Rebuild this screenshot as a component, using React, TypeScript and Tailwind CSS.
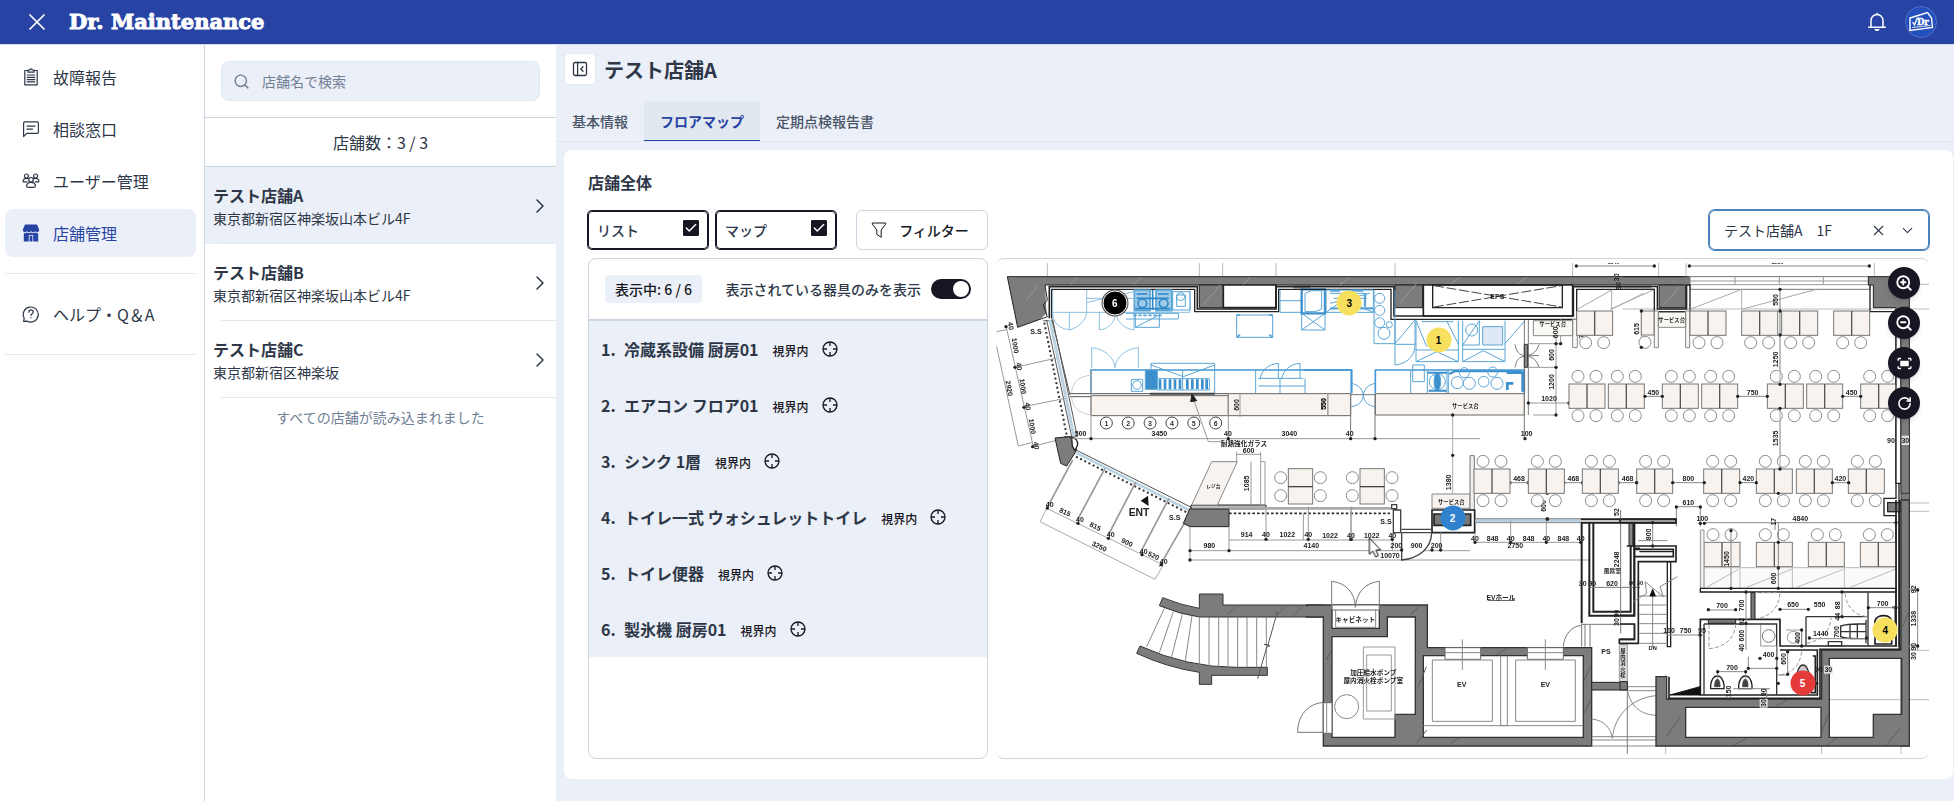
import { useState, type ReactNode } from "react";
import { Check, ChevronDown, ChevronRight, RotateCw, Search, X, ZoomIn, ZoomOut } from "lucide-react";
import { MdFitScreen } from "react-icons/md";

/* ---------- icons ---------- */

const iconProps = {
  width: 18,
  height: 18,
  viewBox: "0 0 18 18",
  fill: "none",
  stroke: "currentColor",
  strokeWidth: 1.2,
  strokeLinecap: "round" as const,
  strokeLinejoin: "round" as const,
  "aria-hidden": true,
};

const ClipboardIcon = () => (
  <svg {...iconProps}>
    <path d="M6 2.5H2.8v14.3h12.4V2.5H12" />
    <path d="M6 4.2V2h1.8a1.2 1.2 0 0 1 2.4 0H12v2.2z" />
    <path d="M5.2 7h7.6M5.2 9.3h7.6M5.2 11.6h7.6M5.2 13.9h7.6" />
  </svg>
);
const ChatIcon = () => (
  <svg {...iconProps}>
    <path d="M1.6 16.6V3a1.2 1.2 0 0 1 1.2-1.2h12.4A1.2 1.2 0 0 1 16.4 3v9.2a1.2 1.2 0 0 1-1.2 1.2H4.6z" />
    <path d="M5 6.2h8M5 9.2h5.5" />
  </svg>
);
const UsersIcon = () => (
  <svg {...iconProps}>
    <circle cx="4.4" cy="4" r="2" />
    <circle cx="13.6" cy="4" r="2" />
    <circle cx="9" cy="7.8" r="2.3" />
    <path d="M4.6 14.4c0-2.4 1.6-4 4.4-4s4.4 1.6 4.4 4c0 1.2-8.800 1.200-8.800 0z" />
    <path d="M4.900 9.800H1.200C.7 8 2 6.300 4.500 6.300c.8 0 1.400.2 1.900.5M13.100 9.800h3.700c.5-1.800-.8-3.500-3.300-3.500-.8 0-1.400.2-1.900.5" />
  </svg>
);
const StoreIcon = () => (
  <svg {...iconProps} fill="currentColor" stroke="none">
    <path d="M3 0.600h12l2.200 5.200c0 1.400-1 2.400-2.100 2.400s-2-.9-2-1.800c0 .9-.9 1.800-2.050 1.800S9 7.300 9 6.400c0 .9-.9 1.800-2.050 1.800S4.900 7.300 4.900 6.400c0 .9-.9 1.800-2 1.800S.8 7.200.8 5.800z" />
    <path d="M1.800 9.200c1.200.3 2.300 0 3.100-.7 1.100 1 3 1 4.100 0 1.100 1 3 1 4.100 0 .8.700 1.900 1 3.100.7v8.200h-5V11H6.800v6.400h-5zM7.600 11.800h2.800v5.600H7.600z" fillRule="evenodd" />
  </svg>
);
const HelpIcon = () => (
  <svg {...iconProps}>
    <path d="M1.700 16.400l.5-3.200A7.500 7.500 0 1 1 5.300 16.200z" />
    <path d="M6.900 7.200c0-3 4.300-2.900 4.300-.2 0 1.700-2.200 1.700-2.200 3.500M9 12.700v.1" />
  </svg>
);
const BellIcon = () => (
  <svg width="20" height="20" viewBox="0 0 20 20" fill="none" stroke="currentColor" strokeWidth="1.500" aria-hidden="true">
    <path d="M4 15V8.500a6 6 0 0 1 12 0V15M1.200 15.200h17.600M10 .8v1.700" />
    <path d="M7.300 17h5.400c-.5 2.700-4.900 2.700-5.400 0z" fill="currentColor" stroke="none" />
  </svg>
);
const TargetIcon = () => (
  <svg width="16" height="16" viewBox="0 0 16 16" fill="none" stroke="currentColor" strokeWidth="1.300" aria-hidden="true">
    <circle cx="8" cy="8" r="7" />
    <path d="M8 1v4M8 11v4M1 8h4M11 8h4" />
  </svg>
);
const FunnelIcon = () => (
  <svg width="16" height="16" viewBox="0 0 16 16" fill="none" stroke="currentColor" strokeWidth="1" strokeLinejoin="round" aria-hidden="true">
    <path d="M1.300 1h13.400v1.200L10.200 8v7.300L5.800 12.400V8L1.300 2.200z" />
  </svg>
);
const CollapseIcon = () => (
  <svg width="16" height="16" viewBox="0 0 16 16" fill="none" stroke="currentColor" strokeWidth="1.300" strokeLinecap="round" strokeLinejoin="round" aria-hidden="true">
    <rect x="1.500" y="1.500" width="13" height="13" rx="1.500" />
    <path d="M5.600 1.500v13M11 5.800L8.800 8l2.200 2.200" />
  </svg>
);

/* ---------- floor plan ---------- */

const BLUE = "#5aa5d6";
const WALL = "#7c7c7c";
const BEIGE = "#f8f3ef";

function T({ x, y, s, r = 0, size = 21 }: { x: number; y: number; s: string; r?: number; size?: number }) {
  return (
    <text x={x} y={y} fontSize={size} textAnchor="middle" dominantBaseline="central" transform={r ? `rotate(${r} ${x} ${y})` : undefined}>
      {s}
    </text>
  );
}

function Seat({ x, y }: { x: number; y: number }) {
  return <circle cx={x} cy={y} r="18" fill="#fff" stroke="#8b8b8b" strokeWidth="3" />;
}

function Pair({ x, y, up = true, down = true }: { x: number; y: number; up?: boolean; down?: boolean }) {
  return (
    <g>
      {up && <><Seat x={x + 27} y={y - 23} /><Seat x={x + 81} y={y - 23} /></>}
      {down && <><Seat x={x + 27} y={y + 95} /><Seat x={x + 81} y={y + 95} /></>}
      <rect x={x} y={y} width="108" height="73" fill={BEIGE} stroke="#777" strokeWidth="3" />
      <path d={`M${x + 54} ${y}v73`} stroke="#555" strokeWidth="4" />
    </g>
  );
}

function SidePair({ x }: { x: number }) {
  return (
    <g>
      <Seat x={x - 23} y={683} /><Seat x={x - 23} y={737} />
      <Seat x={x + 96} y={683} /><Seat x={x + 96} y={737} />
      <rect x={x} y={656} width="73" height="106" fill={BEIGE} stroke="#777" strokeWidth="3" />
      <path d={`M${x} 710h73`} stroke="#444" strokeWidth="4" />
    </g>
  );
}

function Dots({ at }: { at: number[][] }) {
  return <>{at.map(([x, y]) => <circle key={`${x}-${y}`} cx={x} cy={y} r="5" fill="#222" stroke="none" />)}</>;
}

const Tile = ({ x, y, children }: { x: number; y: number; children: ReactNode }) => <g transform={`translate(${x} ${y})`}>{children}</g>;

function FloorPlan() {
  return (
    <svg viewBox="0 0 2799 1473" className="block w-full font-['Liberation_Sans','Noto_Sans_CJK_JP',sans-serif] font-bold" role="img" aria-label="1F フロアマップ">
      <g fill="none" stroke="#444" strokeWidth="3" className="blur-[1px]">
        {/* perimeter guide lines */}
        <g stroke="#bbb">
          <path d="M154 0v40M610 0v40M680 0v40M840 0v40M1197 0v40M1730 0v40M1988 0v40M2070 0v40M2635 0v40" />
          <path d="M2620 64h179M1880 138h919M2705 720h94M2705 745h94M2700 1162h99M2480 1310h319M2009 1235v238M2477 1435v38M2715 1435v38M1894 1300v173" />
        </g>

        {/* north-west: glazed façade, kitchen */}
        <Tile x={-18} y={-39}>
          <path d="M52 80H2758V105H165L170 190L150 208L83 232z" fill={WALL} stroke="none" />
          <path d="M2080 105H165L172 150L160 165L172 200L150 208L83 232L52 80H2080" stroke="#222" />
          <path d="M628 105H700V173H628z" fill={WALL} stroke="#222" />
          <path d="M700 105H858V173H700z" fill="#fff" stroke="#222" strokeWidth="5" />
          <path d="M185 205V118H614V185H866V118H960" stroke="#222" strokeWidth="4" />
          <path d="M178 205V110H622V177H858V110H960" stroke="#222" strokeWidth="5" />
          <path d="M110 150l34-44M240 104l24-22M430 104l24-22M640 165l50-60M760 104l20-22" stroke="#999" />
          <path d="M170 210L245 560M188 208L262 560M160 212h28M222 560h40" stroke="#555" />
          <path d="M180 210L252 560" stroke="#b9d3e2" strokeWidth="9" />
          <path d="M163 218L230 555" stroke="#333" strokeWidth="6" strokeDasharray="6 8" />
          <path d="M185 205L240 435M240 431H715M240 440H715" stroke="#555" />
          <path d="M48 228L130 590M20 290L85 588M75 352L200 324M102 470L225 445M125 590L235 562M85 588L125 578M20 245l30-6" stroke="#999" />
          <path d="M195 564L240 560L260 600L230 648L212 640z" fill={WALL} stroke="#222" />
          <path d="M245 562c14 2 18 10 18 22l-8 18-8-14z" fill="#fff" stroke="#222" strokeWidth="4" />
          <path d="M258 600L610 775" stroke="#555" />
          <path d="M258 608L600 782" stroke="#b9d3e2" strokeWidth="8" />
          <path d="M258 620L596 790" stroke="#333" strokeWidth="6" strokeDasharray="6 8" />
          <path d="M248 630L170 775M345 655L262 810M437 697L355 855M537 745L450 910M600 790L508 950" stroke="#999" strokeWidth="5" />
          <path d="M170 775L520 945M150 815L495 988M150 815l20-40M495 988l25-43" stroke="#aaa" />
          <path d="M452 752L474 737L476 768z" fill="#111" stroke="none" />
          <Dots at={[[48, 230], [75, 352], [102, 472], [128, 590], [172, 774], [264, 820], [355, 865], [456, 914], [514, 944]]} />
          <path d="M600 775L580 820L600 830H717V775z" fill={WALL} stroke="#222" />
          <path d="M603 765H828V777H603z" fill="#bbb" stroke="#222" />
          <path d="M665 635H742L682 765H605z" fill={BEIGE} stroke="#888" />
          <path d="M812 635H825V765H812zM740 635v-30M812 635v-30M740 613h72M783 635v130" stroke="#999" />
          {/* blue equipment */}
          <g stroke={BLUE}>
            <path d="M188 120V187H290V120M290 187H600V120M290 145H430M290 158L430 125M188 187c0 30 20 50 50 52V187M238 240c30-8 50-30 52-53M328 187V240c30-4 48-24 48-53M432 187V240c-30-4-50-24-56-53" stroke="#8cc0e2" />
            <path d="M433 120H480V182H433zM498 120H545V182H498z" fill="#9fcbe8" strokeWidth="5" />
            <g stroke="#2f87c6" strokeWidth="5">
              <circle cx="457" cy="160" r="13" /><circle cx="521" cy="160" r="13" />
              <path d="M440 132l32 0M504 132h32M440 145h96M436 176h104M488 120v60" />
            </g>
            <path d="M548 125H600V180H548zM560 135h26v34h-26zM408 190H565V207H408M436 190V232H508V190M436 232L508 195" />
            <circle cx="572" cy="140" r="12" />
            <path d="M430 196H520" strokeDasharray="10 5" strokeWidth="5" />
            <path d="M740 195H848V262H740z" />
            <path d="M740 195l10 0M740 262l10-8M848 262l-10-8M848 195h-10" strokeWidth="6" />
            <path d="M305 355V293c40 4 68 30 70 60c4-32 30-56 70-60v62" stroke="#8cc0e2" />
            <path d="M303 430V360H1085V430" strokeWidth="5" stroke="#4197d1" />
            <path d="M483 360V340H674V430M483 345L580 380L674 345M424 388H458V424H424z" />
            <circle cx="441" cy="405" r="13" />
            <path d="M466 360H502V418H466z" fill="#3b8fcc" />
            <path d="M510 388V418M525 388V418M540 388V418M555 388V418M570 388V418M592 388V418M607 388V418M622 388V418M637 388V418M650 388V418" strokeWidth="8" stroke="#3b8fcc" />
            <path d="M502 386H658V420H502M578 360v62M797 360V430M870 385V430M945 385V430M805 385H940M810 388c4-28 26-46 55-48V385M875 388c4-28 26-46 55-48V385M805 408h140" />
            <path d="M870 120V187H935M870 152h65M935 187V240H1005V187M935 240L1005 190M935 190L1005 240" />
            <path d="M935 118H1005V190H935z" strokeWidth="7" stroke="#3b8fcc" />
            <path d="M945 130l20-8h30v55l-20 8h-30z" />
          </g>
          <path d="M303 437H715V497H303zM715 431H1082V497H715z" fill={BEIGE} stroke="#666" />
          <path d="M480 431H674" strokeWidth="6" />
          <path d="M303 360V566M715 431V566M245 566H1470M750 431v70M1013 431v66" stroke="#999" />
          <path d="M245 430c0-35 25-52 58-54M245 440c0 32 25 52 58 54" stroke="#ccc" />
          <path d="M608 440L655 575H695" stroke="#999" />
          <path d="M602 455L606 432L620 452z" fill="#222" stroke="#222" />
          {[1, 2, 3, 4, 5, 6].map((n, i) => (
            <g key={n}>
              <circle cx={349 + i * 65.600} cy="519" r="18" stroke="#444" />
              <g fill="#333" stroke="none"><T x={349 + i * 65.600} y={519} s={String(n)} size={21} /></g>
            </g>
          ))}
          <SidePair x={895} />
          <SidePair x={1110} />
          <path d="M717 775H1210" stroke="#aaa" strokeWidth="8" />
          <path d="M717 790H1200" stroke="#333" strokeWidth="5" strokeDasharray="8 6" />
          <path d="M600 830V930M717 830V900M828 777V870M955 770V870M1083 770V870M717 870H1210M600 902H1440M600 930H1800" stroke="#999" />
          <Dots at={[[303, 566], [715, 566], [828, 868], [955, 868], [1083, 868], [600, 902], [717, 902], [600, 930]]} />
          <g fill="#222" stroke="none">
            <T x={63} y={228} s="40" r={80} /><T x={76} y={287} s="1000" r={82} /><T x={88} y={349} s="40" r={80} /><T x={99} y={409} s="1000" r={82} />
            <T x={114} y={469} s="40" r={80} /><T x={127} y={529} s="1000" r={82} /><T x={139} y={587} s="40" r={80} /><T x={58} y={415} s="2920" r={80} />
            <T x={138} y={244} s="S.S" /><T x={272} y={551} s="500" /><T x={508} y={551} s="3450" /><T x={714} y={551} s="40" /><T x={898} y={551} s="3040" />
            <T x={762} y={579} s="耐熱強化ガラス" size={20} /><T x={776} y={601} s="600" /><T x={770} y={700} s="1085" r={-90} /><T x={738} y={465} s="600" r={-90} /><T x={1000} y={462} s="550" r={-90} />
            <T x={670} y={710} s="レジ台" size={14} /><T x={179} y={762} s="40" /><T x={225} y={786} s="815" r={26} /><T x={270} y={808} s="40" /><T x={316} y={829} s="815" r={26} />
            <T x={362} y={853} s="40" /><T x={411} y={877} s="900" r={26} /><T x={461} y={903} s="40" /><T x={491} y={917} s="520" r={26} /><T x={521} y={935} s="40" /><T x={328} y={889} s="3250" r={26} />
            <T x={554} y={801} s="S.S" /><T x={658} y={886} s="980" /><T x={770} y={854} s="914" /><T x={828} y={854} s="40" /><T x={892} y={854} s="1022" /><T x={955} y={854} s="40" /><T x={964} y={886} s="4140" />
            <text x="447" y="788" fontSize="31" textAnchor="middle" dominantBaseline="central">ENT</text>
          </g>
        </Tile>

        {/* north-centre: EPS, counter, service */}
        <Tile x={942} y={-39}>
          <path d="M255 105H338V173H255z" fill={WALL} stroke="#222" />
          <path d="M270 160l50-60M90 104l30-22M420 104l30-22M620 104l30-22" stroke="#999" />
          <path d="M340 105H788V198H340z" fill="#fff" stroke="#222" strokeWidth="5" />
          <path d="M368 105H757V173H368z" stroke="#222" strokeWidth="4" />
          <path d="M372 107L754 171M372 171L754 107" strokeDasharray="30 8" />
          <path d="M-50 118H243V208H800V118H1033" stroke="#222" strokeWidth="4" />
          <path d="M-50 110H252V198H790V110H1025" stroke="#222" strokeWidth="5" />
          <g stroke={BLUE}>
            <path d="M48 120H190V187H48zM48 187L100 150L190 187M60 130h110M70 145h100M60 160l120-30" />
            <path d="M60 122l30 0M120 122h40M165 130v40M60 175h130" strokeWidth="7" />
            <path d="M192 120V281H255V120" /><circle cx="209" cy="145" r="15" /><circle cx="209" cy="181" r="15" /><circle cx="209" cy="218" r="15" /><circle cx="222" cy="250" r="18" /><circle cx="238" cy="224" r="9" />
            <path d="M255 210V345c30-3 56-20 60-55V210M255 281L315 210M255 283h60M318 212V335H445V212M318 300H445M318 335L380 305L445 335M318 212L350 290M410 212l35 70M335 215h95M458 212V335H585V212M458 298H585M458 335L520 302L585 335M458 285L508 212V285H458M585 281L645 212" />
            <circle cx="485" cy="240" r="18" />
            <path d="M518 230H578V285H518z" fill="#dfe8f6" />
            <path d="M-20 360H124V430M196 430V360H643V430" strokeWidth="5" stroke="#4197d1" />
            <path d="M302 362V430M308 345h35v50h-35zM352 362V430M411 362V430M415 430V362" />
            <circle cx="382" cy="395" r="24" /><ellipse cx="382" cy="395" rx="10" ry="26" fill="#3b8fcc" />
            <path d="M352 368h60M356 422h54M418 372l16-8h200" strokeWidth="6" stroke="#3b8fcc" />
            <circle cx="442" cy="398" r="18" /><circle cx="478" cy="400" r="18" /><circle cx="521" cy="395" r="16" /><circle cx="561" cy="400" r="18" /><circle cx="463" cy="368" r="15" /><circle cx="548" cy="366" r="15" />
            <path d="M590 368H638V425M592 420V400h18" strokeWidth="8" stroke="#3b8fcc" />
            <path d="M124 400c20 4 34 16 36 36c2-20 16-32 36-36M124 470c20-2 34-14 36-34c2 20 16 32 36 34" />
          </g>
          <path d="M196 431H643V495H196z" fill={BEIGE} stroke="#666" />
          <path d="M122 431V566M195 431V566M643 210V566M655 210V495M122 434h73M615 283c4 22 12 32 30 34h42M615 352c4-22 12-32 30-34M687 283c-6 20-18 32-40 34M687 352c-6-20-18-32-40-34" stroke="#777" />
          <path d="M643 283H653V352H643z" fill="#888" stroke="#333" />
          <path d="M655 281H752M655 352H738M670 495H738M738 210V495M655 459H777M752 208v72" stroke="#999" />
          <path d="M670 212H788V257H670zM788 208H802V293H788z" fill="#faf8f4" stroke="#888" />
          <path d="M802 178L905 120V178M905 178L1000 130M828 210V280M54 431v64M428 495V790" stroke="#aaa" />
          <path d="M800 48H1030M1138 48H1680" stroke="#888" />
          <path d="M366 732H480V775H366z" fill={BEIGE} stroke="#888" />
          <path d="M480 617H493V780H480z" fill="#eee" stroke="#777" />
          <path d="M366 780H494V848H366z" fill="#fff" stroke="#222" strokeWidth="5" />
          <path d="M372 792H482V826H372z" fill="#777" stroke="#222" strokeWidth="5" />
          <path d="M496 812H812" stroke="#b9cfe0" strokeWidth="10" /><path d="M496 806H812M496 818H812" stroke="#888" />
          <Dots at={[[799, 48], [1033, 48], [1138, 48], [1678, 48], [738, 281], [752, 281], [738, 352], [738, 495], [655, 459], [777, 459], [428, 495], [428, 616], [828, 210], [122, 566], [195, 566], [645, 566], [712, 730], [712, 806], [600, 698], [655, 698], [762, 698], [817, 698], [925, 698], [980, 698]]} />
          <g fill="#222" stroke="none">
            <T x={562} y={139} s="EPS" /><T x={728} y={221} s="サービス台" size={16} /><T x={738} y={247} s="600" r={-90} /><T x={815} y={248} s="700" r={-90} /><T x={725} y={315} s="600" r={-90} />
            <T x={725} y={396} s="1200" r={-90} /><T x={717} y={445} s="1020" /><T x={466} y={467} s="サービス台" size={16} /><T x={40} y={462} s="550" r={-90} /><T x={119} y={551} s="40" /><T x={650} y={551} s="100" />
            <T x={415} y={697} s="1380" r={-90} /><T x={424} y={757} s="サービス台" size={16} /><T x={627} y={685} s="468" /><T x={790} y={685} s="468" /><T x={700} y={768} s="600" r={-90} />
            <T x={920} y={786} s="52" r={-90} />
            <T x={921} y={82} s="30" r={-90} /><T x={924} y={108} s="90" r={-90} /><T x={228} y={813} s="S.S" />
          </g>
        </Tile>

        {/* north-east: dining tables */}
        <Tile x={1872} y={-39}>
          <path d="M210 80H750V118H210z" fill="#fff" stroke="#777" />
          <path d="M210 93H750M210 104H750M345 80V104M478 80V104M610 80V104" stroke="#999" />
          <path d="M117 105H197V173H117z" fill={WALL} stroke="#222" />
          <path d="M0 118H103V185H210V105H200V177H112V110H0" stroke="#222" strokeWidth="4" />
          <path d="M8 80H208" stroke="#222" />
          <path d="M130 165l50-55" stroke="#999" />
          <path d="M745 80H868V185H828V173H760V105H745z" fill={WALL} stroke="#222" />
          <path d="M750 105V185H828V745H792V797H828V1190" stroke="#222" strokeWidth="4" />
          <path d="M843 172H868V1488H843z" fill={WALL} stroke="#333" />
          <path d="M837 180V758H803V785H837V1190" stroke="#222" strokeWidth="4" />
          <path d="M803 758H843V785H803z" fill={WALL} stroke="#222" />
          <path d="M-30 178L100 120M210 178L365 118V178M365 178L590 118M480 118V730M64 183V292" stroke="#aaa" />
          <path d="M103 183H115V293H103zM197 183H209V293H197zM115 187H197V232H115z" fill="#faf8f4" stroke="#888" />
          <Pair x={-130} y={183} up={false} />
          <rect x="64" y="183" width="38" height="72" fill={BEIGE} stroke="#777" /><Seat x={75} y={277} />
          <Pair x={210} y={183} up={false} /><Pair x={365} y={183} up={false} /><Pair x={485} y={183} up={false} /><Pair x={641} y={183} up={false} />
          {[-153, -35, 127, 245, 442, 560, 722].map((x) => <Pair key={x} x={x} y={402} />)}
          {[-438, -275, -113, 50, 251, 409, 529, 685].map((x) => <Pair key={x} x={x} y={657} />)}
          <path d="M828 180H843V700H828z" fill="#fff" stroke="#222" strokeWidth="4" />
          <path d="M843 172H868V730H843z" fill={WALL} stroke="#333" />
          <path d="M75 439H127M355 439H442M668 439H722M160 698H251M360 698H409M637 698H685M170 770H240M169 770V830M241 770V830M255 818H828M465 810V840M-330 698h55M-167 698h54M-5 698h55" stroke="#888" />
          <path d="M480 118V402M480 475V657" stroke="#aaa" />
          <Dots at={[[75, 439], [127, 439], [353, 439], [442, 439], [668, 439], [722, 439], [158, 698], [253, 698], [360, 698], [409, 698], [637, 698], [686, 698], [169, 771], [241, 771], [480, 118], [480, 183], [480, 255], [480, 403], [480, 475], [480, 657], [475, 730], [64, 183], [64, 292], [50, 698], [241, 820], [253, 820], [828, 818]]} />
          <g fill="#222" stroke="none">
            <T x={466} y={150} s="550" r={-90} /><T x={466} y={328} s="1250" r={-90} /><T x={466} y={565} s="1535" r={-90} /><T x={155} y={210} s="サービス台" size={16} /><T x={50} y={237} s="615" r={-90} />
            <T x={100} y={426} s="450" /><T x={398} y={426} s="750" /><T x={695} y={426} s="450" /><T x={23} y={685} s="468" /><T x={205} y={685} s="800" /><T x={385} y={685} s="420" /><T x={661} y={685} s="420" />
            <T x={205} y={757} s="610" /><T x={247} y={804} s="100" /><T x={541} y={804} s="4840" /><T x={813} y={571} s="90" /><rect x="845" y="557" width="22" height="28" fill="#ddd" /><T x={856} y={571} s="30" />
            <T x={-20} y={36} s="1840" size={16} /><T x={472} y={36} s="3210" size={16} />
          </g>
        </Tile>

        {/* south-west: curved stair */}
        <Tile x={-18} y={711}>
          <path d="M518 293Q570 315 628 325V282H699V315H1002V351H628Q570 343 508 317z" fill={WALL} stroke="#333" />
          <path d="M450 438Q590 502 740 502H832V526H665V553H628V517Q530 502 440 460z" fill={WALL} stroke="#333" />
          <path d="M523 325L470 440M550 335L508 458M577 343L545 470M606 348L586 482M628 351V494M657 351V499M686 351V500M714 351V501M743 351V502M771 351V502M800 351V502M829 351V502" stroke="#888" />
          <path d="M862 335L834 435L822 433L840 437L830 442L803 536" stroke="#555" />
          <path d="M710 345l30-28M860 345l30-28M910 345l30-28" stroke="#666" />
          <path d="M923 697H1002M923 697C923 645 955 610 1002 607" stroke="#777" />
        </Tile>

        {/* south-centre: pump room, elevators */}
        <Tile x={942} y={711}>
          <path
            d="M-10 315H352V443H845V738H40V351H-10zM66 325V385H208V325zM66 410H232V351H316V643H255V712H66zM340 467H820V712H340z"
            fillRule="evenodd"
            fill={WALL}
            stroke="#333"
            strokeWidth="4"
          />
          <path d="M300 345l30-28M325 560l24-60M320 730l30-40M420 730l30-16M50 480l14-30M822 640l20-40M822 540l20-40M560 465l30-20" stroke="#5e5e5e" />
          <path d="M-14 319H0V347H-14z" fill={WALL} stroke="none" />
          <path d="M40 608H66V700H40zM405 443H512V478H405zM652 443H760V478H652z" fill="#fff" stroke="#666" />
          <path d="M50 608V700M405 458H512M652 458H760M457 418V510M706 418V510" stroke="#888" />
          <path d="M66 315H208V330H66z" fill="#fff" stroke="#666" /><path d="M77 330V382H197V330" stroke="#888" />
          <path d="M65 325V244c42 4 70 34 71 78c3-44 30-74 72-78v81" stroke="#777" />
          <path d="M160 441H255V657H160zM170 465H244V633H170z" stroke="#999" /><circle cx="110" cy="620" r="36" stroke="#888" />
          <path d="M367 480H547V664H367zM617 480H796V664H617zM340 677H820M572 467V677H592V467" stroke="#888" />
          <path d="M250 30H272V98H250zM245 14h15v12h-15zM275 88H366M275 98H366M275 98V180c54-6 88-36 90-80" fill="#fff" stroke="#444" strokeWidth="4" />
          <path d="M392 98V150M-20 40V120M123 20V120M247 98V150M602 62V130M709 62V130M496 127H812M495 100V125" stroke="#999" />
          {/* wind lobby shaft */}
          <path d="M812 58H1100M812 68H1100M815 65V370M838 70V347H973V70M850 70V335H962V70" stroke="#222" strokeWidth="6" />
          <path d="M815 373H975V420M815 373V440M825 373V440M840 373V440M760 440C762 405 785 378 815 376M932 30V400M838 262H990" stroke="#777" />
          <path d="M957 70H970V138H957z" fill="#888" stroke="#222" /><path d="M970 145H990M928 432V418H975" stroke="#222" strokeWidth="5" />
          <path d="M845 547H952V570H845z" fill={WALL} stroke="#222" /><path d="M928 434H952V545H928z" fill="#ddd" stroke="#999" />
          <path d="M952 560H1045M952 572H1045M845 710H1045M845 720H1045M845 738H1045M952 545V760M845 657c40 4 58 30 62 58c5-60 50-120 130-128M952 570c10 50 40 74 88 76" stroke="#888" />
          <Dots at={[[123, 118], [247, 118], [275, 150], [366, 150], [392, 150], [495, 127], [602, 127], [709, 127], [812, 127], [712, 58]]} />
          <g fill="#222" stroke="none">
            <T x={60} y={105} s="1022" /><T x={123} y={105} s="40" /><T x={185} y={105} s="1022" /><T x={247} y={105} s="40" /><T x={259} y={137} s="200" /><T x={320} y={137} s="900" /><T x={380} y={137} s="200" /><T x={240} y={167} s="10070" />
            <T x={495} y={114} s="40" /><T x={548} y={114} s="848" /><T x={602} y={114} s="40" /><T x={656} y={114} s="848" /><T x={709} y={114} s="40" /><T x={760} y={114} s="848" /><T x={812} y={114} s="40" /><T x={616} y={137} s="2750" />
            <T x={573} y={291} s="EVホール" size={20} /><rect x="533" y="300" width="82" height="2" /><T x={136} y={357} s="キャビネット" size={20} /><T x={190} y={517} s="加圧給水ポンプ" size={20} /><T x={190} y={540} s="屋内消火栓ポンプ室" size={20} />
            <T x={455} y={553} s="EV" /><T x={706} y={553} s="EV" /><T x={888} y={453} s="PS" /><T x={907} y={214} s="風除室" size={17} /><T x={906} y={249} s="620" /><T x={920} y={178} s="2248" r={-90} />
            <T x={818} y={249} s="30" /><T x={847} y={249} s="90" /><T x={920} y={341} s="90" r={-90} /><T x={920} y={366} s="30" r={-90} />
            {["屋", "内", "消", "火", "栓"].map((c, i) => <T key={c} x={939} y={452 + i * 18} s={c} size={16} />)}
          </g>
        </Tile>

        {/* south-east: stairs, toilets, sofa seats */}
        <Tile x={1872} y={711}>
          <path
            d="M108 530H140V597H605V450H843V0H868V738H108zM197 622H603V712H197zM628 475V712H760V643H845V475z"
            fillRule="evenodd"
            fill={WALL}
            stroke="#333"
            strokeWidth="4"
          />
          <path d="M140 710l40-60M340 735l40-20M470 618l30-18M620 735l30-20M800 735l40-50M848 380l20-50M605 700l20-60" stroke="#5e5e5e" />
          {[252, 409, 565, 721].map((x) => <Pair key={x} x={x} y={127} down={false} />)}
          <path d="M252 203H828V265H252z" fill="#fbfaf8" stroke="#bbb" />
          <path d="M360 203V265M517 203V265M673 203V265M260 262L355 208M380 262L515 208M530 262L670 208M690 262L825 208" stroke="#bbb" />
          <path d="M241 90H252V265H241z" fill="#eee" stroke="#999" />
          <path d="M241 265H828V276H241z" fill="#fff" stroke="#222" strokeWidth="4" />
          <path d="M828 0V438H480V358H241V585H592V450H480M838 0V448H600V595H147V530" stroke="#222" strokeWidth="5" />
          <path d="M252 372V585M252 372H470V585M744 278V438M558 350V438M558 350H740" stroke="#333" strokeWidth="4" />
          <path d="M265 358H347V370H265zM393 278H405V358H393z" fill="#777" stroke="#222" />
          <path d="M347 372c-2 40-30 70-80 74V372M480 280c-4 44-30 70-70 76M675 280c4 40 28 66 66 70M545 455c-4 40-30 68-70 70M405 278H480M560 430c40-6 70-36 74-76" stroke="#999" strokeDasharray="12 6" />
          <path d="M150 585L240 560V585z" fill="#111" stroke="#111" />
          {[292, 376].map((x) => (
            <g key={x}>
              <path d={`M${x - 20} 566V555C${x - 16} 530 ${x - 6} 528 ${x} 528S${x + 16} 530 ${x + 20} 555V566z`} fill="#fff" stroke="#222" strokeWidth="4" />
              <path d={`M${x - 8} 560c0-30 16-30 16 0z`} fill="#444" />
            </g>
          ))}
          <circle cx="446" cy="408" r="19" stroke="#777" /><circle cx="520" cy="412" r="18" stroke="#999" /><path d="M422 375V438H470M498 390H545V438" stroke="#999" />
          <path d="M530 540c0-60 38-60 38 0" fill="#ccc" stroke="#333" strokeWidth="4" /><path d="M578 468h8v110h-14M816 322h10v60M765 432v-70c8-20 44-20 50 0v70z" stroke="#222" strokeWidth="5" />
          <path d="M662 378c20-6 46-6 50-6h26v44h-26c-20 0-36 0-50-6zM690 372v46M712 372v46M738 360v70M662 395H738M625 425h40v12h-40z" fill="#fff" stroke="#333" strokeWidth="4" />
          {/* stairs */}
          <path d="M0 58H168V68H0zM20 68H40V138H20M30 138H168V185H55V430H0M43 346V148H160V170H43" stroke="#222" strokeWidth="5" />
          <path d="M142 185H152V440H142zM58 155H160" stroke="#222" strokeWidth="4" /><path d="M0 346H43M0 372H43V418H0" stroke="#222" strokeWidth="5" />
          <path d="M58 288H142M58 315H142M58 343H142M58 371H142M58 400H142M58 430H142M98 280V440M40 305L80 280L75 245L130 290L120 260L172 230M98 68V138M55 122H142" stroke="#888" />
          <path d="M90 288L98 268L106 288z" fill="#111" stroke="#111" />
          <path d="M0 545H22V570H0z" fill={WALL} stroke="#222" />
          <path d="M140 405H250M265 330H347M378 276V450M480 328H565M745 323H828M666 280V350M568 416H740M545 390V438M385 505H470V440M385 470V505M293 515H377M293 515v20M377 515v20M340 566H450M440 566V610M503 455V525H470M333 92V265M475 68V265M893 265V450M865 268H895M865 438H895" stroke="#888" />
          <Dots at={[[333, 92], [333, 265], [475, 127], [475, 204], [475, 265], [265, 329], [347, 329], [378, 276], [378, 370], [480, 328], [565, 328], [666, 276], [666, 350], [745, 323], [828, 323], [568, 414], [740, 414], [545, 390], [545, 438], [293, 515], [377, 515], [385, 505], [470, 505], [503, 455], [503, 523], [470, 475], [420, 475], [98, 68], [98, 138], [893, 270], [893, 438], [240, 405], [475, 550], [590, 550]]} />
          <g fill="#222" stroke="none">
            <T x={320} y={177} s="1450" r={-90} /><T x={460} y={235} s="600" r={-90} /><T x={306} y={316} s="700" /><T x={365} y={316} s="700" r={-90} /><T x={519} y={315} s="650" /><T x={599} y={315} s="550" /><T x={788} y={311} s="700" />
            <T x={602} y={401} s="1440" /><T x={650} y={396} s="700" r={-90} /><T x={532} y={414} s="400" r={-90} /><T x={366} y={407} s="600" r={-90} /><T x={366} y={443} s="40" r={-90} /><T x={446} y={463} s="400" /><T x={489} y={477} s="600" r={-90} />
            <T x={336} y={502} s="700" /><T x={326} y={574} s="150" r={-90} /><T x={431} y={577} s="90" r={-90} /><rect x="419" y="597" width="24" height="26" fill="#ddd" /><T x={431} y={609} s="30" r={-90} /><T x={597} y={509} s="90" /><rect x="612" y="497" width="26" height="24" fill="#ddd" /><T x={625} y={509} s="30" />
            <T x={147} y={392} s="100" /><T x={197} y={392} s="750" /><T x={246} y={392} s="95" /><T x={86} y={103} s="800" r={-90} /><T x={98} y={444} s="DN" size={17} /><T x={48} y={249} s="90 30" size={17} /><T x={652} y={316} s="88" r={-90} /><T x={652} y={350} s="44" r={-90} /><T x={365} y={365} s="92" r={-90} />
            <T x={881} y={268} s="92" r={-90} /><T x={881} y={356} s="1338" r={-90} /><T x={881} y={440} s="90" r={-90} /><T x={881} y={468} s="30" r={-90} /><T x={460} y={65} s="17" r={-90} />
          </g>
        </Tile>
      </g>
      {/* pointer */}
      <path d="M1120 825V874L1131 864L1139 882L1147 878L1140 861H1154z" fill="#fff" stroke="#111" strokeWidth="3" />
    </svg>
  );
}

/* ---------- data ---------- */

const NAV = [
  { label: "故障報告", Icon: ClipboardIcon },
  { label: "相談窓口", Icon: ChatIcon },
  { label: "ユーザー管理", Icon: UsersIcon },
  { label: "店舗管理", Icon: StoreIcon, active: true },
];

const STORES = [
  { name: "テスト店舗A", address: "東京都新宿区神楽坂山本ビル4F" },
  { name: "テスト店舗B", address: "東京都新宿区神楽坂山本ビル4F" },
  { name: "テスト店舗C", address: "東京都新宿区神楽坂" },
];

const EQUIPMENT = ["冷蔵系設備 厨房01", "エアコン フロア01", "シンク 1層", "トイレ一式 ウォシュレットトイレ", "トイレ便器", "製氷機 厨房01"];

/* x / y are fractions of the plan's width and height */
const PINS = [
  { n: 1, x: 442.600 / 933, y: 76.500 / 491, tone: "bg-[#f6e05e] text-black" },
  { n: 2, x: 456.600 / 933, y: 255 / 491, tone: "bg-[#3182ce] text-white" },
  { n: 3, x: 353.300 / 933, y: 40 / 491, tone: "bg-[#f6e05e] text-black" },
  { n: 4, x: 889.300 / 933, y: 367 / 491, tone: "bg-[#f6e05e] text-black" },
  { n: 5, x: 806.500 / 933, y: 420 / 491, tone: "bg-[#e53a3a] text-white" },
  { n: 6, x: 118.700 / 933, y: 39.500 / 491, tone: "bg-black text-white ring-1 ring-[#555] border border-white" },
];

function ViewToggle({ id, label }: { id: string; label: string }) {
  const [on, setOn] = useState(true);
  return (
    <label htmlFor={id} className="flex h-[38px] w-[120px] items-center justify-between rounded border border-[#171723] px-2 text-sm font-medium ring-1 ring-[#171723]">
      {label}
      <span className="relative mb-1 block size-4">
        <input id={id} type="checkbox" checked={on} onChange={() => setOn(!on)} className="peer block size-4 appearance-none rounded-[1px] border border-[#171723] checked:bg-[#171723]" />
        <Check size={14} strokeWidth={2.500} className="pointer-events-none absolute top-px left-px hidden text-white peer-checked:block" />
      </span>
    </label>
  );
}

const MAP_TOOLS = [
  { label: "拡大", icon: <ZoomIn size={18} strokeWidth={2.500} /> },
  { label: "縮小", icon: <ZoomOut size={18} strokeWidth={2.500} /> },
  { label: "全体表示", icon: <MdFitScreen size={17} /> },
  { label: "リセット", icon: <RotateCw size={15} strokeWidth={2.500} /> },
];

export default function App() {
  const [onlyVisible, setOnlyVisible] = useState(true);
  return (
    <div className="flex min-h-screen flex-col bg-[#ebeff7] font-['Noto_Sans_CJK_JP','Noto_Sans',sans-serif] text-[#2d3748]">
      <header className="flex h-[45px] items-center border-b border-[#d5dcea] bg-[#2743a4] pr-[17px] pb-px pl-[23px] text-white">
        <button type="button" aria-label="メニューを閉じる" className="mr-[18px]"><X size={28} strokeWidth={1.500} /></button>
        <a href="#home" className="font-['DejaVu_Serif',serif] text-[21px] leading-7 font-bold [-webkit-text-stroke:1px_white]">Dr. Maintenance</a>
        <div className="ml-auto flex items-center gap-[18px]">
          <button type="button" aria-label="通知"><BellIcon /></button>
          <button type="button" aria-label="アカウント" className="size-8">
            <svg viewBox="0 0 32 32" className="size-8" aria-hidden="true">
              <circle cx="16" cy="16" r="15.500" fill="#2350bd" stroke="#5d78c9" strokeWidth="0.800" />
              <path d="M5 12L22.500 6.500L26.500 12L27.500 21.500L5 24.500z" fill="none" stroke="#fff" strokeWidth="1.400" />
              <path d="M7 21.500L25.500 19.500" stroke="#fff" strokeWidth="0.800" />
              <path d="M7.500 16l2 3 2.500-6.500h2" fill="none" stroke="#fff" strokeWidth="1.300" />
              <text x="12" y="19" fontSize="8.500" fontWeight="bold" fill="#fff" stroke="#fff" strokeWidth="0.400" className="font-['DejaVu_Serif',serif]">Dr</text>
            </svg>
          </button>
        </div>
      </header>

      <div className="flex flex-1">
        <nav className="w-[205px] shrink-0 border-r border-[#cbd5e0] bg-white pt-2 pr-2 pl-[5px]">
          <ul className="flex flex-col gap-1">
            {NAV.map(({ label, Icon, active }) => (
              <li key={label}>
                <a href="#nav" className={active ? "flex h-12 items-center gap-[13px] rounded-lg bg-[#ebeff7] pl-[17px] text-[#2743a4]" : "flex h-12 items-center gap-[13px] rounded-lg pl-[17px]"}>
                  <Icon />{label}
                </a>
              </li>
            ))}
          </ul>
          <div className="my-4 border-y border-[#e2e8f0] py-4">
            <a href="#help" className="flex h-12 items-center gap-[13px] pl-[17px]"><HelpIcon />ヘルプ・Q＆A</a>
          </div>
        </nav>

        <aside className="w-[351px] shrink-0 bg-white">
          <div className="border-b border-[#cbd5e0] p-4">
            <label className="flex h-10 items-center gap-3 rounded-lg border border-[#e2e8f0] bg-[#ebeff7] px-[11px] text-[#718096]">
              <Search size={17} aria-hidden="true" />
              <input type="search" aria-label="店舗名で検索" placeholder="店舗名で検索" className="min-w-0 flex-1 bg-transparent text-sm outline-none placeholder:text-[#718096]" />
            </label>
          </div>
          <p className="flex h-[49px] items-center justify-center border-b border-[#cbd5e0]">店舗数：3 / 3</p>
          <ul>
            {STORES.map((s, i) => (
              <li key={s.name} className={i === 0 ? "bg-[#ebeff7]" : ""}>
                <a href="#store" className="flex items-center justify-between pt-4 pr-1 pb-3.5 pl-2">
                  <span>
                    <span className="block leading-6 font-bold">{s.name}</span>
                    <span className="block text-sm leading-[22px]">{s.address}</span>
                  </span>
                  <ChevronRight size={24} strokeWidth={1.500} />
                </a>
                <div className="ml-4 border-b border-[#e2e8f0]" />
              </li>
            ))}
          </ul>
          <p className="py-2 text-center text-sm leading-[22px] text-[#718096]">すべての店舗が読み込まれました</p>
        </aside>

        <main className="min-w-0 flex-1">
          <div className="flex h-14 items-start gap-2 px-2 pt-2">
            <button type="button" aria-label="一覧を閉じる" className="flex size-8 items-center justify-center rounded border border-[#e2e8f0] bg-white"><CollapseIcon /></button>
            <h1 className="text-xl leading-[34px] font-bold">テスト店舗A</h1>
          </div>
          <div role="tablist" className="flex border-b border-[#dfe5ee] text-sm font-medium text-[#4a5568]">
            <button type="button" role="tab" className="h-10 px-4">基本情報</button>
            <button type="button" role="tab" aria-selected="true" className="h-10 border-b border-[#2743a4] bg-[#e2e8f0] px-4 font-bold text-[#2743a4]">フロアマップ</button>
            <button type="button" role="tab" className="h-10 px-4">定期点検報告書</button>
          </div>

          <section className="mt-2 mr-px mb-5 ml-2 rounded-lg bg-white px-6 pt-5 pb-5">
            <h2 className="leading-6 font-bold">店舗全体</h2>
            <div className="mt-4 mb-2 flex h-10 items-center">
              <div className="flex gap-2">
                <ViewToggle id="view-list" label="リスト" />
                <ViewToggle id="view-map" label="マップ" />
              </div>
              <button type="button" className="ml-5 flex h-10 w-[132px] items-center justify-center gap-3 rounded-md border border-[#cbd5e0] pr-1 text-sm font-medium text-[#171723]"><FunnelIcon />フィルター</button>
              <div className="ml-auto flex h-10 w-[220px] items-center rounded-md border border-[#4a82bb] pr-3 pl-3.5 ring-1 ring-[#4a82bb]">
                <select aria-label="フロア" className="min-w-0 flex-1 appearance-none bg-transparent text-sm outline-none"><option>テスト店舗A　1F</option></select>
                <button type="button" aria-label="選択を解除" className="mr-3"><X size={17} strokeWidth={1.500} /></button>
                <ChevronDown size={17} strokeWidth={1.500} className="pointer-events-none" />
              </div>
            </div>

            <div className="flex items-stretch gap-2">
              <div className="w-[400px] shrink-0 overflow-hidden rounded-lg border border-[#cbd5e0]">
                <div className="flex h-[62px] items-center justify-between border-b-2 border-[#cbd5e0] px-4 text-sm font-medium">
                  <span className="rounded bg-[#ebeff7] px-2.5 py-1 leading-5 text-[#171723]">表示中: 6 / 6</span>
                  <label htmlFor="only-visible" className="flex items-center gap-2.5">
                    表示されている器具のみを表示
                    <input
                      id="only-visible"
                      type="checkbox"
                      role="switch"
                      checked={onlyVisible}
                      onChange={() => setOnlyVisible(!onlyVisible)}
                      className="flex h-5 w-10 appearance-none rounded-full bg-[#a0aec0] p-0.5 before:size-4 before:rounded-full before:bg-white checked:justify-end checked:bg-[#171723]"
                    />
                  </label>
                </div>
                <ol className="bg-[#ebeff7]">
                  {EQUIPMENT.map((name, i) => (
                    <li key={name} className="flex h-14 items-center px-3 pb-px text-[#171723]">
                      <span className="w-[23px] font-bold text-[#2d3748]">{i + 1}.</span>
                      <span className="font-bold text-[#2d3748]">{name}</span>
                      <span className="mt-1 mr-[13px] ml-3.5 text-xs font-medium">視界内</span>
                      <button type="button" aria-label={`${name}の位置を表示`}><TargetIcon /></button>
                    </li>
                  ))}
                </ol>
              </div>

              <div className="relative min-w-0 flex-1 rounded-lg border-y border-[#cbd5e0] py-1">
                <div className="relative">
                  <FloorPlan />
                  {PINS.map((p) => (
                    <button
                      key={p.n}
                      type="button"
                      aria-label={`器具 ${p.n}`}
                      className={`absolute flex size-[25px] -translate-x-1/2 -translate-y-1/2 items-center justify-center rounded-full font-['Liberation_Sans',sans-serif] text-[10px] font-bold ${p.tone}`}
                      style={{ left: `${p.x * 100}%`, top: `${p.y * 100}%` }}
                    >
                      {p.n}
                    </button>
                  ))}
                </div>
                <div className="absolute top-2 right-[9px] flex flex-col gap-2">
                  {MAP_TOOLS.map((t) => (
                    <button key={t.label} type="button" aria-label={t.label} className="flex size-8 items-center justify-center rounded-full bg-[#171723] text-white shadow-md">{t.icon}</button>
                  ))}
                </div>
              </div>
            </div>
          </section>
        </main>
      </div>
    </div>
  );
}
